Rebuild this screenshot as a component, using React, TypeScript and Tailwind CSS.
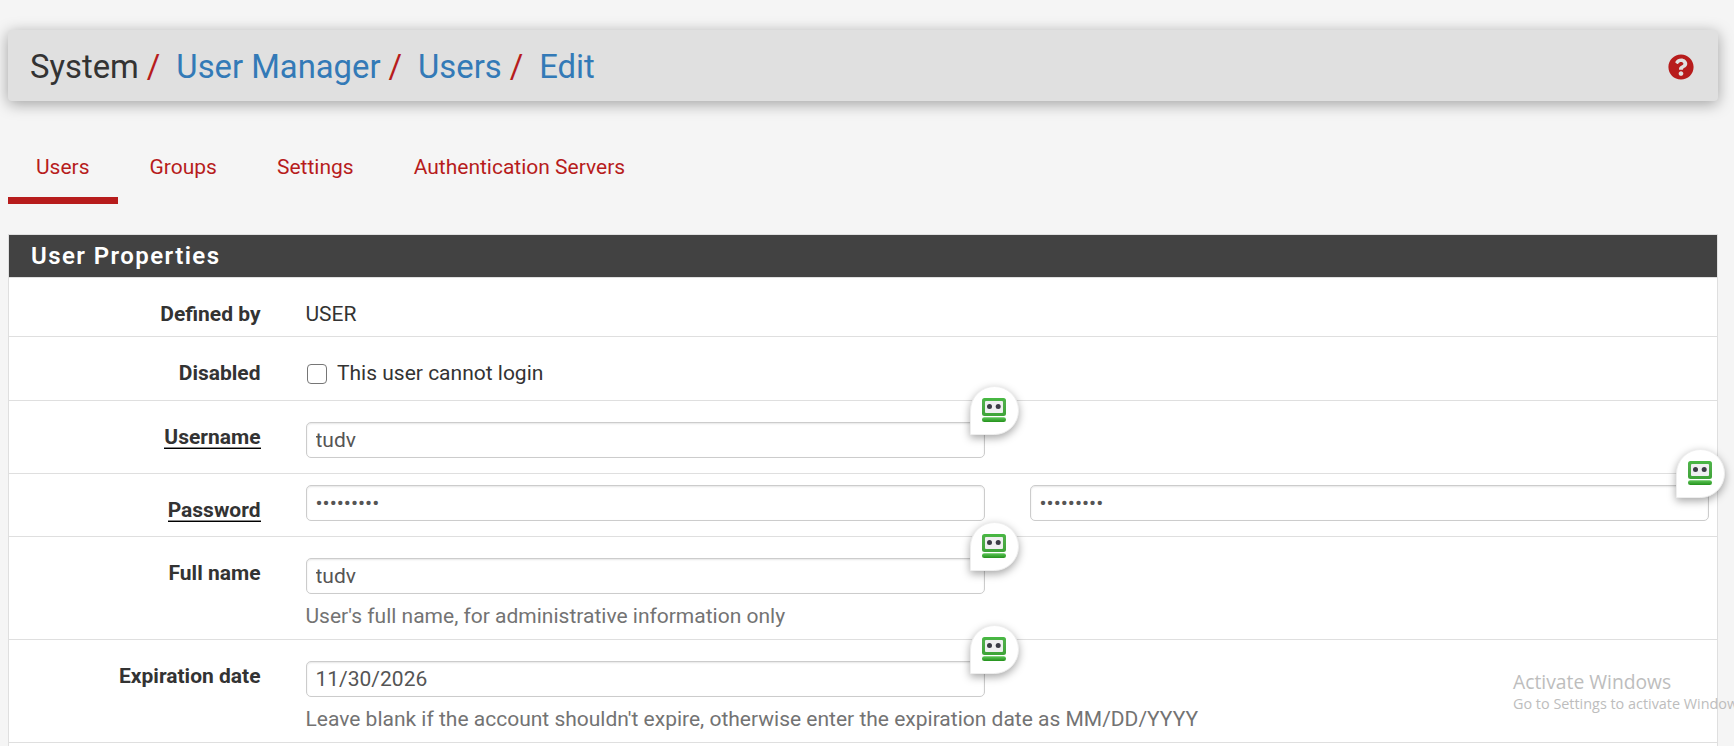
import type { ReactNode } from "react";
import { FaQuestionCircle } from "react-icons/fa";

const crumbs = ["User Manager", "Users", "Edit"];
const tabs = ["Users", "Groups", "Settings", "Authentication Servers"];

function FillBadge({ place }: { place: string }) {
  return (
    <button
      type="button"
      aria-label="Fill field"
      className={`absolute -top-[36px] z-10 flex h-[49px] w-[49px] items-center rounded-full rounded-bl-none border border-[#eeeeee] bg-white pl-[11px] shadow-[0_3px_8px_rgba(0,0,0,0.35)] ${place}`}
    >
      <svg width="24" height="24" viewBox="0 0 24 24" className="relative -top-px">
        <defs>
          <linearGradient id="frame" x1="0" y1="0" x2="0" y2="1">
            <stop offset="0" stopColor="#45b940" />
            <stop offset="0.25" stopColor="#4fae4a" />
            <stop offset="1" stopColor="#3ea437" />
          </linearGradient>
          <linearGradient id="base" x1="0" y1="0" x2="0" y2="1">
            <stop offset="0" stopColor="#5cc556" />
            <stop offset="1" stopColor="#24921c" />
          </linearGradient>
        </defs>
        <rect x="0" y="0" width="24" height="18" rx="2.5" fill="url(#frame)" />
        <rect x="3" y="3" width="18" height="12" rx="1" fill="#efeff0" />
        <circle cx="7.5" cy="8.5" r="2.5" fill="#3b3b45" />
        <circle cx="16.2" cy="8.5" r="2.5" fill="#3b3b45" />
        <rect x="0" y="19.3" width="24" height="4.7" rx="2.3" fill="url(#base)" />
      </svg>
    </button>
  );
}

function Field({
  value,
  type = "text",
  badge = "left-[664px]",
}: {
  value: string;
  type?: string;
  badge?: string | null;
}) {
  return (
    <div className="relative h-9 w-[679px] shrink-0">
      <input
        type={type}
        defaultValue={value}
        className="block h-9 w-full rounded-[5px] border border-[#cccccc] bg-white px-[9px] text-[21px] text-[#555555] shadow-[inset_0_1px_2px_rgba(0,0,0,0.1)] outline-none"
      />
      {badge && <FillBadge place={badge} />}
    </div>
  );
}

function Row({
  label,
  required = false,
  size,
  children,
}: {
  label: string;
  required?: boolean;
  size: string;
  children: ReactNode;
}) {
  return (
    <div className={`flex gap-[45px] border-b border-[#dfdfdf] ${size}`}>
      <div className="w-[251.5px] shrink-0 pt-[21px] text-right font-bold leading-[30px]">
        <span
          className={
            required
              ? "inline-block h-[27px] border-b border-black leading-[30px] shadow-[inset_0_-1px_0_#8a8a8a]"
              : ""
          }
        >
          {label}
        </span>
      </div>
      {children}
    </div>
  );
}

export default function App() {
  return (
    <div className="relative h-[746px] overflow-hidden bg-[#f5f5f5] pl-2 pr-4 pt-[30px] font-[Roboto,sans-serif] text-[21px] leading-[30px] text-[#333333]">
      <header className="flex h-[71px] items-center justify-between rounded-[4px] bg-[#e0e0e0] pl-[22px] pr-[24px] shadow-[0_3px_15px_rgba(0,0,0,0.35)]">
        <nav className="mt-[2px] flex items-center text-[32.8px]">
          <span>System</span>
          {crumbs.map((crumb) => (
            <span key={crumb} className="flex">
              <span className="pl-[8px] pr-[16px] text-[#b71c1c]">/</span>
              <a className="text-[#337ab7]">{crumb}</a>
            </span>
          ))}
        </nav>
        <FaQuestionCircle className="mt-[3px] size-[26px] text-[#b71c1c]" />
      </header>

      <ul className="mt-[33px] flex h-[70px] gap-[4px] text-[#b71c1c]">
        {tabs.map((tab, i) => (
          <li
            key={tab}
            className={`px-[28px] pt-[18px] ${i === 0 ? "border-b-[7px] border-[#b71c1c]" : ""}`}
          >
            {tab}
          </li>
        ))}
      </ul>

      <section className="mt-[30px] h-[530px] border border-[#dfdfdf] bg-white">
        <h2 className="h-[43px] border-b border-[#dfdfdf] bg-[#424242] pl-[22px] text-[24px] font-semibold leading-[42px] tracking-[1.42px] text-white">
          User Properties
        </h2>

        <Row label="Defined by" size="h-[59px]">
          <span className="pt-[21px]">USER</span>
        </Row>

        <Row label="Disabled" size="h-[64px]">
          <label className="flex items-start pt-[21px]">
            <input
              type="checkbox"
              className="ml-px mt-[6px] size-[20px] appearance-none rounded-[4px] border-[1.5px] border-[#767676] bg-white"
            />
            <span className="ml-[10.5px]">This user cannot login</span>
          </label>
        </Row>

        <Row label="Username" required size="h-[73px]">
          <div className="pt-[21px]">
            <Field value="tudv" />
          </div>
        </Row>

        <Row label="Password" required size="h-[63px]">
          <div className="flex gap-[45px] pt-[11px]">
            <Field type="password" value="secret123" badge={null} />
            <Field type="password" value="secret123" badge="left-[646px]" />
          </div>
        </Row>

        <Row label="Full name" size="h-[103px]">
          <div className="pt-[21px]">
            <Field value="tudv" />
            <p className="mt-[7px] text-[#737373]">User's full name, for administrative information only</p>
          </div>
        </Row>

        <Row label="Expiration date" size="h-[103px]">
          <div className="pt-[21px]">
            <Field value="11/30/2026" />
            <p className="mt-[7px] text-[#737373]">
              Leave blank if the account shouldn't expire, otherwise enter the expiration date as MM/DD/YYYY
            </p>
          </div>
        </Row>
      </section>

      <aside className="pointer-events-none absolute left-[1513px] top-[668px] whitespace-nowrap font-['Open_Sans',sans-serif] text-[#bdbdbd]">
        <p className="text-[19.3px] leading-7">Activate Windows</p>
        <p className="text-[14.4px] leading-4">Go to Settings to activate Windows.</p>
      </aside>
    </div>
  );
}
